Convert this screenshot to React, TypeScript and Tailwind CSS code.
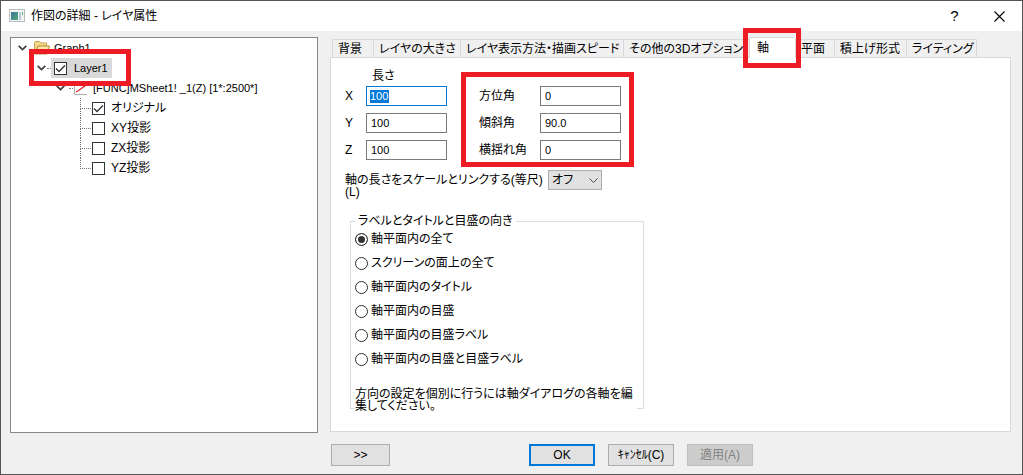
import React, { useState } from 'react';

interface CheckBoxProps {
  id: string;
  defaultChecked?: boolean;
}

function CheckBox({ id, defaultChecked = false }: CheckBoxProps) {
  return (
    <span className="grid size-[13px] shrink-0">
      <input
        id={id}
        type="checkbox"
        defaultChecked={defaultChecked}
        className="peer col-start-1 row-start-1 size-[13px] appearance-none border border-[#333333] bg-white"
      />
      <svg
        className="pointer-events-none invisible col-start-1 row-start-1 size-[13px] peer-checked:visible"
        viewBox="0 0 13 13"
        fill="none"
        stroke="#333333"
        strokeWidth={1.3}
      >
        <path d="M2 6.5L5 9.5L11 3.5" />
      </svg>
    </span>
  );
}

function Chevron() {
  return (
    <svg className="h-[6px] w-[9px] shrink-0" viewBox="0 0 9 6" fill="none" stroke="#404040" strokeWidth={1.7}>
      <path d="M0.7 0.8L4.5 4.6L8.3 0.8" />
    </svg>
  );
}

const tabs = [
  { label: '背景', width: 'w-[41px]' },
  { label: 'レイヤの大きさ', width: 'w-[87px]' },
  { label: 'レイヤ表示方法・描画スピード', width: 'w-[163px]' },
  { label: 'その他の3Dオプション', width: 'w-[126px]' },
  { label: '軸', width: 'w-[46px]' },
  { label: '平面', width: 'w-[39px]' },
  { label: '積上げ形式', width: 'w-[72px]' },
  { label: 'ライティング', width: 'w-[71px]' },
];

const projections = [
  { id: 'original', label: 'オリジナル', checked: true },
  { id: 'xy', label: 'XY投影', checked: false },
  { id: 'zx', label: 'ZX投影', checked: false },
  { id: 'yz', label: 'YZ投影', checked: false },
];

const directions = [
  '軸平面内の全て',
  'スクリーンの面上の全て',
  '軸平面内のタイトル',
  '軸平面内の目盛',
  '軸平面内の目盛ラベル',
  '軸平面内の目盛と目盛ラベル',
];

const angles = [
  { id: 'azimuth', label: '方位角', value: '0' },
  { id: 'tilt', label: '傾斜角', value: '90.0' },
  { id: 'roll', label: '横揺れ角', value: '0' },
];

function TitleBar() {
  return (
    <header className="flex h-[30px] items-center bg-white pl-2">
      <svg className="h-[14px] w-4" viewBox="0 0 16 14">
        <defs>
          <linearGradient id="app" x1="0" y1="0" x2="1" y2="1">
            <stop offset="0" stopColor="#3f6f9c" />
            <stop offset="1" stopColor="#4fae7a" />
          </linearGradient>
        </defs>
        <rect x="0.5" y="0.5" width="15" height="12" fill="#f4f4f4" stroke="#b9bcbf" />
        <rect x="2" y="3" width="7" height="8" fill="url(#app)" />
        <rect x="10" y="3" width="2" height="8" fill="#b7c9d6" />
        <rect x="13" y="3" width="1" height="3" fill="#4fae7a" />
      </svg>
      <h1 className="ml-[6px] grow text-[12px]">作図の詳細 - レイヤ属性</h1>
      <button type="button" className="h-full w-[45px] text-[15px]" aria-label="ヘルプ">
        ?
      </button>
      <button type="button" className="flex h-full w-[45px] items-center justify-center" aria-label="閉じる">
        <svg className="size-[11px]" viewBox="0 0 11 11" stroke="#000000" strokeWidth={1.1}>
          <path d="M0.5 0.5L10.5 10.5M10.5 0.5L0.5 10.5" />
        </svg>
      </button>
    </header>
  );
}

function LayerTree() {
  return (
    <nav className="w-[308px] shrink-0 border border-[#828790] bg-white">
      <div className="flex h-5 items-center pl-[7px]">
        <Chevron />
        <svg className="ml-[7px] h-[14px] w-4" viewBox="0 0 16 14">
          <path d="M0.5 12V1.5L1.5 0.5H5.5L7 2H12.5V12Z" fill="#f3d98b" stroke="#c9a24a" />
          <path d="M1 13L4 5H15.5L13 13Z" fill="#fbe9a8" stroke="#b08a30" />
        </svg>
        <span className="ml-1 text-[11px]">Graph1</span>
      </div>

      <div className="relative flex h-5 items-center pl-[26px]">
        <Chevron />
        <span className="ml-px w-1 border-t border-dotted border-[#808080]" />
        <label htmlFor="layer1" className="flex h-5 items-center gap-[7px] bg-[#d9d9d9] pr-1 pl-[3px] text-[11px]">
          <CheckBox id="layer1" defaultChecked />
          Layer1
        </label>
        <span className="pointer-events-none absolute -top-[9px] left-[18px] z-10 h-[37px] w-[102px] border-[5px] border-[#ed1c24]" />
      </div>

      <div className="flex h-5 items-center pl-[45px]">
        <Chevron />
        <span className="ml-1 w-1 border-t border-dotted border-[#808080]" />
        <svg className="ml-[1px] size-[13px]" viewBox="0 0 13 13" fill="none">
          <path d="M0.5 0V12.5H13" stroke="#b0b0b0" />
          <path d="M2 10L4.5 8.5L11.5 3.5" stroke="#ed1c24" strokeWidth={1.2} />
        </svg>
        <span className="ml-[6px] text-[11px]">[FUNC]MSheet1! _1(Z) [1*:2500*]</span>
      </div>

      <ul className="pl-[69px]">
        {projections.map((item, i) => (
          <li key={item.id} className="flex h-5 items-center">
            <span className="flex h-full w-3 flex-col">
              <span className="h-[11px] w-[11px] border-b border-l border-dotted border-[#707070]" />
              {i < projections.length - 1 && <span className="grow border-l border-dotted border-[#707070]" />}
            </span>
            <label htmlFor={item.id} className="flex items-center gap-[6px]">
              <CheckBox id={item.id} defaultChecked={item.checked} />
              {item.label}
            </label>
          </li>
        ))}
      </ul>
    </nav>
  );
}

function TabBar() {
  return (
    <div role="tablist" className="flex h-5 items-end pl-[2px]">
      {tabs.map((tab) => {
        const active = tab.label === '軸';
        return (
          <div key={tab.label} className={`relative shrink-0 ${tab.width} ${active ? 'z-10 -mb-px h-[21px]' : 'h-[18px]'}`}>
            <button
              type="button"
              role="tab"
              aria-selected={active}
              className={`h-full w-full border-t border-l border-[#d9d9d9] text-left whitespace-nowrap ${
                active ? 'bg-white pl-[7px]' : 'bg-[#f0f0f0] pl-[5px]'
              } ${tab.label === 'ライティング' ? 'border-r' : ''}`}
            >
              {tab.label}
            </button>
            {active && (
              <span className="pointer-events-none absolute -top-[9px] -left-[6px] h-10 w-[58px] border-[5px] border-[#ed1c24]" />
            )}
          </div>
        );
      })}
    </div>
  );
}

function AxisPanel() {
  const [direction, setDirection] = useState(0);

  return (
    <section role="tabpanel" className="grow border border-[#d9d9d9] bg-white pt-2 pl-[14px]">
      <div className="flex items-end gap-8">
        <div>
          <div className="h-5 pl-[27px] leading-5">長さ</div>
          <div className="grid grid-cols-[21px_81px] items-center gap-y-[7px]">
            <label htmlFor="x">X</label>
            <span className="flex h-5 items-center border border-[#0078d7] pl-[3px]">
              <input
                id="x"
                type="text"
                defaultValue="100"
                className="h-[13px] w-[19px] bg-[#0078d7] text-[11px] text-white outline-none"
              />
            </span>
            <label htmlFor="y">Y</label>
            <input id="y" type="text" defaultValue="100" className="h-5 w-full border border-[#7a7a7a] pl-1 text-[11px]" />
            <label htmlFor="z">Z</label>
            <input id="z" type="text" defaultValue="100" className="h-5 w-full border border-[#7a7a7a] pl-1 text-[11px]" />
          </div>
        </div>

        <div className="relative grid grid-cols-[61px_81px] items-center gap-y-[7px]">
          {angles.map((angle) => (
            <React.Fragment key={angle.id}>
              <label htmlFor={angle.id}>{angle.label}</label>
              <input
                id={angle.id}
                type="text"
                defaultValue={angle.value}
                className="h-5 w-full border border-[#7a7a7a] pl-1 text-[11px]"
              />
            </React.Fragment>
          ))}
          <span className="pointer-events-none absolute -top-[14px] -right-[13px] -bottom-[7px] -left-[18px] border-[5px] border-[#ed1c24]" />
        </div>
      </div>

      <div className="mt-[10px] flex h-[26px] items-start">
        <label htmlFor="link" className="w-[203px] pt-1 leading-[12px] whitespace-nowrap">
          軸の長さをスケールとリンクする(等尺)
          <br />
          (L)
        </label>
        <span className="relative">
          <select id="link" className="h-5 w-[54px] appearance-none border border-[#adadad] bg-[#e1e1e1] pl-[3px]">
            <option>オフ</option>
            <option>オン</option>
          </select>
          <svg
            className="pointer-events-none absolute top-2 right-1 h-[6px] w-[9px]"
            viewBox="0 0 9 6"
            fill="none"
            stroke="#505050"
          >
            <path d="M0.5 0.5L4.5 4.5L8.5 0.5" />
          </svg>
        </span>
      </div>

      <fieldset className="mt-5 ml-[5px] w-[294px] border border-[#dcdcdc] pr-[6px] pl-1">
        <legend className="px-[3px] leading-[11px]">ラベルとタイトルと目盛の向き</legend>
        {directions.map((label, i) => (
          <label key={label} className="flex h-6 items-center gap-[3px]">
            <input
              type="radio"
              name="direction"
              checked={direction === i}
              onChange={() => setDirection(i)}
              className="size-[13px] appearance-none rounded-full border border-[#333333] bg-white checked:bg-[#333333] checked:shadow-[inset_0_0_0_2px_white]"
            />
            {label}
          </label>
        ))}
        <p className="relative mt-[17px] -mb-1 bg-white leading-[12px] whitespace-nowrap">
          方向の設定を個別に行うには軸ダイアログの各軸を編
          <br />
          集してください。
        </p>
      </fieldset>
    </section>
  );
}

export default function App() {
  return (
    <div className="flex min-h-screen flex-col border border-[#555555] bg-[#f0f0f0] font-['Liberation_Sans','Noto_Sans_CJK_JP',sans-serif] text-[12px] leading-[16px] text-black [font-feature-settings:'palt']">
      <TitleBar />
      <main className="flex grow gap-3 pt-[6px] pr-[11px] pl-[9px]">
        <LayerTree />
        <div className="mb-px flex grow flex-col">
          <TabBar />
          <AxisPanel />
        </div>
      </main>
      <footer className="flex pt-[11px] pb-2 pl-[330px]">
        <button type="button" className="h-[22px] w-[59px] border border-[#adadad] bg-[#e1e1e1]">
          &gt;&gt;
        </button>
        <div className="ml-[139px] flex gap-[13px]">
          <button type="button" className="h-[22px] w-[66px] border-2 border-[#0078d7] bg-[#e1e1e1]">
            OK
          </button>
          <button type="button" className="h-[22px] w-[66px] border border-[#adadad] bg-[#e1e1e1]">
            ｷｬﾝｾﾙ(C)
          </button>
          <button type="button" disabled className="h-[22px] w-[66px] border border-[#bfbfbf] bg-[#cccccc] text-[#838383]">
            適用(A)
          </button>
        </div>
      </footer>
    </div>
  );
}
